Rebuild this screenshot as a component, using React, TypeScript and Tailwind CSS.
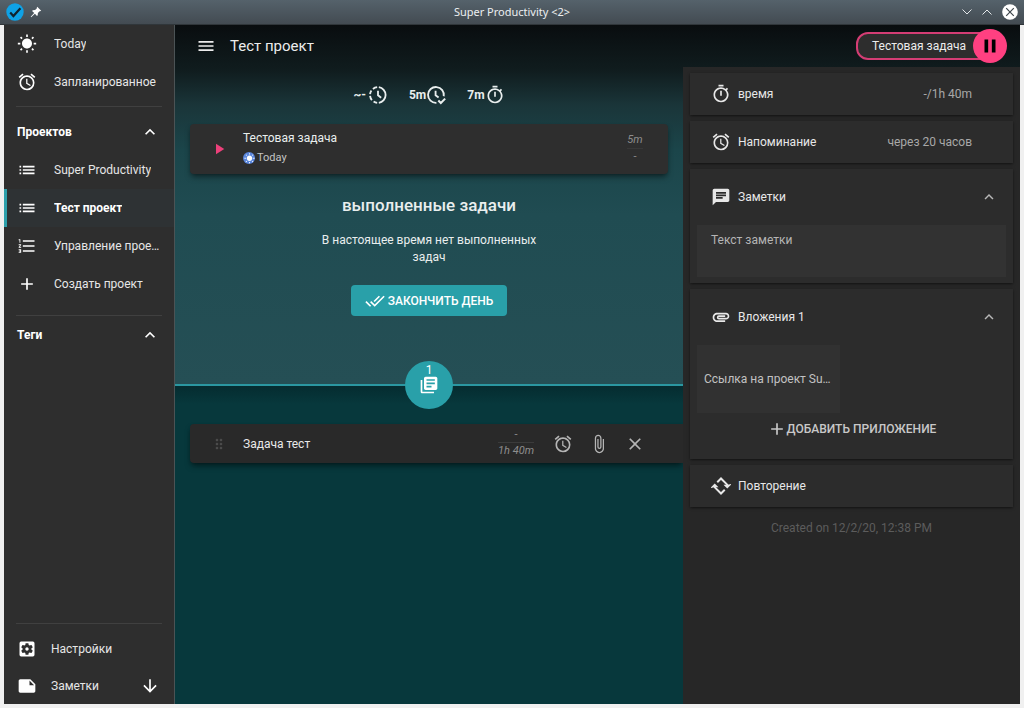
import React from 'react';
import type { IconType } from 'react-icons';
import {
  MdAdd,
  MdAlarm,
  MdArrowDownward,
  MdAttachFile,
  MdAttachment,
  MdChat,
  MdClose,
  MdDoneAll,
  MdDragIndicator,
  MdExpandLess,
  MdFormatListNumbered,
  MdLibraryBooks,
  MdList,
  MdMenu,
  MdNote,
  MdOutlineTimer,
  MdPause,
  MdPlayArrow,
  MdSettingsApplications,
  MdWbSunny,
} from 'react-icons/md';

// ---- Custom icons ----

const AppLogo = () => (
  <svg viewBox="0 0 18 18" className="size-[18px]" aria-hidden="true">
    <circle cx="9" cy="9" r="8.7" fill="#0fa2e6" />
    <path d="M4.2 9.6 7.4 13 14.4 5.2" fill="none" stroke="#10222e" strokeWidth="2.2" />
  </svg>
);

const PinIcon = () => (
  <svg viewBox="0 0 12 12" className="size-3" fill="#fff" aria-hidden="true">
    <path d="M7.2.8 11.2 4.8 10 5.3 9.6 5.2 7.9 7 7.7 9.2 7 9.9 4.9 7.8 1.2 11.3.7 10.8 4.2 7.1 2.1 5 2.8 4.3 5 4.1 6.8 2.4 6.7 2z" />
  </svg>
);

const RemainingIcon = () => (
  <svg viewBox="0 0 24 24" className="size-5" fill="none" stroke="currentColor" strokeWidth="2.2" aria-hidden="true">
    <path d="M13 2.6a9.5 9.5 0 0 1 0 18.8" />
    <path d="M11 2.6a9.5 9.5 0 0 0-8.5 8.4M2.5 13a9.5 9.5 0 0 0 8.5 8.4" strokeDasharray="5.5 2.6" />
    <path d="M12 7v5.3l3.8 3" />
  </svg>
);

const ClockCheckIcon = () => (
  <svg viewBox="0 0 24 24" className="size-5" fill="none" stroke="currentColor" strokeWidth="2.2" aria-hidden="true">
    <path d="M12.5 21.4A9.5 9.5 0 1 1 21.3 13.5" />
    <path d="M11.5 7v5.3l3.6 2.8" />
    <path d="m14.8 18.6 3 3 5.2-5.2" strokeWidth="2.4" />
  </svg>
);

const RepeatIcon = () => (
  <svg viewBox="0 0 24 24" className="size-5 shrink-0" fill="none" stroke="currentColor" strokeWidth="2.4" aria-hidden="true">
    <path d="M7.500 7.500 12 3l8 8M16.500 16.500 12 21l-8-8" />
    <path d="M24 9.500v1L19.500 15 15 10.500h5zM0 14.500v-1L4.500 9 9 13.500H4z" fill="currentColor" stroke="none" />
  </svg>
);

// ---- Window title bar ----

const TitleBar = () => (
  <div className="h-[25px] shrink-0 grid grid-cols-[1fr_auto_1fr] items-center px-1.5 bg-linear-to-b from-[#55626b] to-[#434b52] border-b border-[#30363a]">
    <div className="flex items-center gap-1.5">
      <AppLogo />
      <PinIcon />
    </div>
    <span className="font-['Noto_Sans',sans-serif] text-[11px] text-[#eceff1]">Super Productivity &lt;2&gt;</span>
    <div className="flex items-center justify-end gap-2.5 text-[#e4e7e9]">
      <button aria-label="Minimize">
        <svg viewBox="0 0 10 6" className="w-2.5 h-1.5" fill="none" stroke="currentColor"><path d="m.5.5 4.500 4.500 4.500-4.500" /></svg>
      </button>
      <button aria-label="Maximize">
        <svg viewBox="0 0 10 6" className="w-2.5 h-1.5" fill="none" stroke="currentColor"><path d="M.5 5.500 5 1l4.500 4.500" /></svg>
      </button>
      <button aria-label="Close">
        <svg viewBox="0 0 16 16" className="size-4"><circle cx="8" cy="8" r="7.800" fill="#fff" /><path d="m4.200 4.200 7.600 7.600m0-7.600-7.600 7.600" stroke="#3f474d" strokeWidth="1.200" /></svg>
      </button>
    </div>
  </div>
);

// ---- Sidebar ----

interface NavItemProps {
  icon: IconType;
  label: string;
  active?: boolean;
}

const NavItem: React.FC<NavItemProps> = ({ icon: Icon, label, active }) => (
  <a
    href="#"
    className={`h-[38px] flex items-center gap-[17px] pl-[10px] pr-3 border-l-[3px] ${
      active ? 'border-[#2da0ab] bg-[#2e3234] font-bold text-white' : 'border-transparent'
    }`}
  >
    <Icon size={20} className="shrink-0 text-white" />
    <span className="truncate">{label}</span>
  </a>
);

const SectionHeader = ({ label }: { label: string }) => (
  <button className="w-full h-[38px] flex items-center justify-between pl-[13px] pr-[14px] font-bold text-white">
    {label}
    <MdExpandLess size={20} />
  </button>
);

const Divider = () => <hr className="mx-3 border-[#404040]" />;

const Sidebar = () => (
  <nav className="w-[171px] shrink-0 flex flex-col bg-[#2e2e2e] border-r border-[#4b5355] text-[#e6e6e6]">
    <NavItem icon={MdWbSunny} label="Today" />
    <NavItem icon={MdAlarm} label="Запланированное" />
    <div className="pt-[5px] pb-1.5"><Divider /></div>
    <SectionHeader label="Проектов" />
    <NavItem icon={MdList} label="Super Productivity" />
    <NavItem icon={MdList} label="Тест проект" active />
    <NavItem icon={MdFormatListNumbered} label="Управление проектами" />
    <NavItem icon={MdAdd} label="Создать проект" />
    <div className="pt-3"><Divider /></div>
    <SectionHeader label="Теги" />

    <div className="mt-auto">
      <Divider />
      <a href="#" className="mt-1.5 h-[37px] flex items-center gap-[14px] pl-[13px]">
        <MdSettingsApplications size={20} className="text-white" />
        Настройки
      </a>
      <a href="#" className="h-[37px] flex items-center gap-[14px] pl-[13px] pr-[14px]">
        <MdNote size={20} className="text-white" />
        Заметки
        <MdArrowDownward size={20} className="ml-auto text-white" />
      </a>
    </div>
  </nav>
);

// ---- Header ----

const Header = () => (
  <header className="h-[42px] shrink-0 flex items-center pl-[21px] pr-[13px] text-[#ececec]">
    <button aria-label="Menu"><MdMenu size={20} /></button>
    <h1 className="ml-3.5 text-[15px]">Тест проект</h1>
    <div className="ml-auto flex items-center">
      <span className="h-7 flex items-center pl-3.5 pr-[25px] -mr-5 rounded-xl border-2 border-[#d43d74] bg-[#2d2d2d]">
        Тестовая задача
      </span>
      <button aria-label="Pause" className="size-[34px] flex items-center justify-center rounded-full bg-[#ff4081] text-black">
        <MdPause size={22} />
      </button>
    </div>
  </header>
);

// ---- Task list ----

const TaskList = () => (
  <section className="h-[319px] flex flex-col items-center px-[15px] border-b-2 border-[#2b97a1] text-[#e9eeee]">
    <div className="mt-[18px] flex items-center gap-[21px] font-bold">
      <span className="flex items-center gap-0.5">~-<RemainingIcon /></span>
      <span className="flex items-center">5m<ClockCheckIcon /></span>
      <span className="flex items-center">7m<MdOutlineTimer size={20} /></span>
    </div>

    <div className="mt-[19px] w-full h-[50px] flex items-center shrink-0 rounded-sm bg-[#2e2e2e] shadow-md/40">
      <button aria-label="Start" className="w-[53px] flex justify-end pr-[15px] text-[#ec407a]"><MdPlayArrow size={18} /></button>
      <div className="flex-1 pb-0.5">
        <p className="leading-5">Тестовая задача</p>
        <p className="flex items-center gap-0.5 text-[11px] leading-5 text-[#c4c4c4]">
          <span className="size-3 flex items-center justify-center rounded-full bg-[#5a86dc] text-white"><MdWbSunny size={11} /></span>
          Today
        </p>
      </div>
      <div className="w-[66px] pb-0.5 text-center text-[11px] leading-4 text-[#8d8d8d]">
        <p className="mx-auto w-4 border-b border-[#383838] italic">5m</p>
        <p>-</p>
      </div>
    </div>

    <h2 className="mt-[19px] text-[17px] leading-6 font-medium">выполненные задачи</h2>
    <p className="mt-[15px] w-[230px] text-center leading-[17px]">В настоящее время нет выполненных задач</p>
    <button className="mt-[19px] h-[31px] shrink-0 flex items-center gap-[3px] px-3.5 rounded-sm bg-[#29a0a9] font-medium text-white">
      <MdDoneAll size={20} />
      ЗАКОНЧИТЬ ДЕНЬ
    </button>
  </section>
);

const Backlog = () => (
  <section className="flex-1 flex flex-col bg-linear-to-b from-[#052c30] to-[#07383c] to-[18px]">
    <button className="relative -mt-[25px] self-center size-12 flex flex-col items-center rounded-full bg-[#29a0a9] text-white">
      <span className="mt-0.5 leading-3.5">1</span>
      <MdLibraryBooks size={20} className="-mt-0.5" />
    </button>
    <div className="mt-[15px] ml-[15px] h-[39px] flex items-center rounded-l-sm bg-[#292929] shadow-md/40 text-[#b5b5b5]">
      <MdDragIndicator size={16} className="ml-[21px] text-[#4c4c4c]" />
      <p className="ml-4 flex-1 text-[#e9e9e9]">Задача тест</p>
      <div className="text-center text-[11px] leading-4 text-[#8d8d8d]">
        <p className="border-b border-[#3b3b3b] leading-3.5">-</p>
        <p className="italic">1h 40m</p>
      </div>
      <div className="flex gap-4 ml-[19px] mr-[38px]">
        <button aria-label="Reminder"><MdAlarm size={20} /></button>
        <button aria-label="Attachment"><MdAttachFile size={20} /></button>
        <button aria-label="Remove"><MdClose size={20} /></button>
      </div>
    </div>
  </section>
);

// ---- Detail panel ----

const card = 'bg-[#2c2c2c] shadow-sm/40 text-[#e8e8e8]';

interface DetailRowProps {
  icon: React.ReactNode;
  label: string;
  value?: string;
}

const DetailRow: React.FC<DetailRowProps> = ({ icon, label, value }) => (
  <div className={`${card} h-[42px] flex items-center gap-[7px] pl-[21px] pr-[41px]`}>
    {icon}
    <span>{label}</span>
    {value && <span className="ml-auto text-[#a8a8a8]">{value}</span>}
  </div>
);

const PanelHeader = ({ icon, label }: { icon: React.ReactNode; label: string }) => (
  <button className="w-full h-14 flex items-center gap-[7px] pl-[21px] pr-[15px]">
    {icon}
    <span>{label}</span>
    <MdExpandLess size={18} className="ml-auto text-[#b8b8b8]" />
  </button>
);

const DetailPanel = () => (
  <aside className="w-[337px] shrink-0 flex flex-col gap-1.5 px-[7px] pt-1.5 bg-[#272727]">
    <DetailRow icon={<MdOutlineTimer size={20} />} label="время" value="-/1h 40m" />
    <DetailRow icon={<MdAlarm size={20} />} label="Напоминание" value="через 20 часов" />
    <section className={`${card} pb-1.5`}>
      <PanelHeader icon={<MdChat size={20} />} label="Заметки" />
      <div className="mx-[7px] h-[52px] px-3.5 pt-1.5 bg-[#323232] text-[#b5b5b5]">Текст заметки</div>
    </section>
    <section className={`${card} pb-3.5`}>
      <PanelHeader icon={<MdAttachment size={20} />} label="Вложения 1" />
      <a href="#" className="mx-[7px] w-[143px] h-[68px] px-[7px] flex items-center bg-[#313131] text-[#c2c2c2]">
        <span className="truncate">Ссылка на проект Super Productivity</span>
      </a>
      <button className="mx-auto h-8 flex items-center font-medium text-[#c8c8c8]">
        <MdAdd size={20} />
        ДОБАВИТЬ ПРИЛОЖЕНИЕ
      </button>
    </section>
    <DetailRow icon={<RepeatIcon />} label="Повторение" />
    <p className="mt-1.5 text-center text-[#5c5c5c]">Created on 12/2/20, 12:38 PM</p>
  </aside>
);

export default function App() {
  return (
    <div className="min-h-screen flex flex-col bg-[#f0f0f0] font-[Roboto,sans-serif] text-[12px]">
      <TitleBar />
      <div className="flex-1 flex mx-[4px] mb-[4px]">
        <Sidebar />
        <div className="flex-1 min-w-0 flex flex-col bg-[linear-gradient(to_bottom,#090d0f_0px,#101c1e_45px,#1a3539_80px,#1b454a_125px,#204c52_190px,#254f55_360px)]">
          <Header />
          <div className="flex-1 flex">
            <main className="flex-1 min-w-0 flex flex-col">
              <TaskList />
              <Backlog />
            </main>
            <DetailPanel />
          </div>
        </div>
      </div>
    </div>
  );
}
